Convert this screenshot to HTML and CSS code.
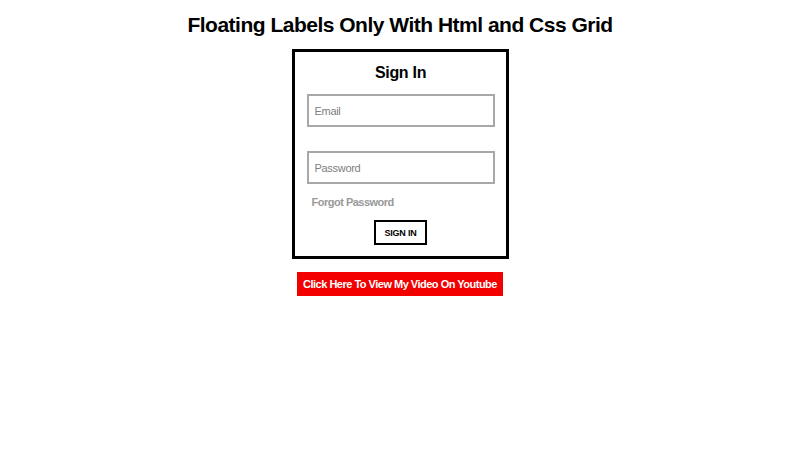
FILE: index.html
```html
<!DOCTYPE html>
<html lang="en">
<head>
<meta charset="utf-8">
<title>Floating Labels</title>
<link rel="stylesheet" href="styles.css">
</head>
<body>
<h1 class="title">Floating Labels Only With Html and Css Grid</h1>
<form class="card">
  <h2 class="card-title">Sign In</h2>
  <label class="field">
    <input class="field-input" type="email" placeholder="Email">
  </label>
  <label class="field">
    <input class="field-input" type="password" placeholder="Password">
  </label>
  <a class="forgot" href="#">Forgot Password</a>
  <button class="signin" type="button">SIGN IN</button>
</form>
<a class="yt" href="#">Click Here To View My Video On Youtube</a>
</body>
</html>
```
FILE: styles.css
```css
html, body {
  margin: 0;
  padding: 0;
  background: #fff;
}
body {
  font-family: "Liberation Sans", Arial, sans-serif;
  display: flex;
  flex-direction: column;
  align-items: center;
  color: #000;
}
.title {
  font-size: 21px;
  letter-spacing: -0.5px;
  line-height: 25px;
  margin: 12px 0 12px;
  font-weight: bold;
}
.card {
  box-sizing: border-box;
  width: 217px;
  border: 3px solid #000;
  padding: 10px 11px 11px 12px;
  display: grid;
  grid-template-columns: 1fr;
}
.card-title {
  margin: 0 0 10px;
  text-align: center;
  font-size: 16px;
  letter-spacing: -0.3px;
  line-height: 22px;
}
.field {
  display: grid;
  margin-bottom: 24px;
}
.field + .field {
  margin-bottom: 10px;
}
.field-input {
  box-sizing: border-box;
  height: 33px;
  width: 100%;
  border: 2px solid #a8a8a8;
  padding: 0 6px;
  font-family: "Liberation Sans", Arial, sans-serif;
  font-size: 11px;
  letter-spacing: -0.3px;
  outline: none;
}
.field-input::placeholder {
  color: #808080;
}
.forgot {
  padding-left: 5px;
  font-size: 11px;
  letter-spacing: -0.5px;
  font-weight: bold;
  line-height: 16px;
  color: #999;
  text-decoration: none;
}
.signin {
  justify-self: center;
  margin-top: 10px;
  box-sizing: border-box;
  width: 53px;
  height: 25px;
  border: 2px solid #000;
  background: #fff;
  font-family: "Liberation Sans", Arial, sans-serif;
  font-size: 9px;
  letter-spacing: -0.2px;
  font-weight: bold;
  color: #000;
  padding: 0;
}
.yt {
  margin-top: 13px;
  box-sizing: border-box;
  width: 206px;
  height: 24px;
  line-height: 24px;
  text-align: center;
  background: #f20000;
  color: #fff;
  font-size: 11px;
  letter-spacing: -0.5px;
  font-weight: bold;
  text-decoration: none;
  white-space: nowrap;
}
```
